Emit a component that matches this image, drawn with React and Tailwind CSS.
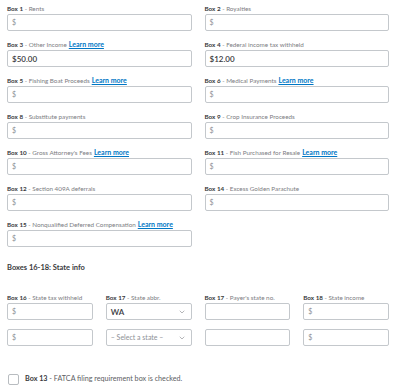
import { ChevronDown } from 'lucide-react';

const FIELDS = [
    { box: 'Box 1', label: 'Rents' },
    { box: 'Box 2', label: 'Royalties' },
    { box: 'Box 3', label: 'Other Income', learn: true, value: '$50.00' },
    { box: 'Box 4', label: 'Federal income tax withheld', value: '$12.00' },
    { box: 'Box 5', label: 'Fishing Boat Proceeds', learn: true },
    { box: 'Box 6', label: 'Medical Payments', learn: true },
    { box: 'Box 8', label: 'Substitute payments' },
    { box: 'Box 9', label: 'Crop Insurance Proceeds' },
    { box: 'Box 10', label: "Gross Attorney's Fees", learn: true },
    { box: 'Box 11', label: 'Fish Purchased for Resale', learn: true },
    { box: 'Box 12', label: 'Section 409A deferrals' },
    { box: 'Box 14', label: 'Excess Golden Parachute' },
    { box: 'Box 15', label: 'Nonqualified Deferred Compensation', learn: true },
];

function Label({ box, label, learn }) {
    return (
        <div className="h-[9px] leading-[9px] text-[6.3px] whitespace-nowrap mb-[1px]">
            <span className="font-bold text-[#393a3d]">{box}</span>
            <span className="text-[#7c7d82]"> - {label}</span>
            {learn && (
                <span className="ml-[2px] text-[7px] font-bold text-[#0077c5] underline">Learn more</span>
            )}
        </div>
    );
}

function Money({ value }) {
    return (
        <div className="h-[17px] rounded-[2px] border border-[#c4c8cc] bg-white flex items-center pl-[4px]">
            {value ? (
                <span className="text-[8px] font-semibold text-[#393a3d]">{value}</span>
            ) : (
                <span className="text-[7px] text-[#8d9096]">$</span>
            )}
        </div>
    );
}

function Select({ value, placeholder }) {
    return (
        <div className="h-[17px] rounded-[2px] border border-[#c4c8cc] bg-white flex items-center justify-between pl-[4px] pr-[5px]">
            {value ? (
                <span className="text-[8px] font-semibold text-[#393a3d]">{value}</span>
            ) : (
                <span className="text-[7px] text-[#8d9096]">{placeholder}</span>
            )}
            <ChevronDown size={8} strokeWidth={1.5} className="text-[#6b6c72]" />
        </div>
    );
}

export default function App() {
    return (
        <div className="w-[401px] h-[390px] bg-white pl-[7px] pr-[12px] pt-[4px] font-['Lato',sans-serif]">
            <div className="grid grid-cols-2 gap-x-[13px] gap-y-[9px]">
                {FIELDS.map(f => (
                    <div key={f.box}>
                        <Label {...f} />
                        <Money value={f.value} />
                    </div>
                ))}
            </div>

            <div className="mt-[16px] h-[10px] leading-[10px] text-[7.5px] font-bold text-[#393a3d]">
                Boxes 16-18: State info
            </div>

            <div className="mt-[20px] grid grid-cols-4 gap-x-[13px]">
                <Label box="Box 16" label="State tax withheld" />
                <Label box="Box 17" label="State abbr." />
                <Label box="Box 17" label="Payer's state no." />
                <Label box="Box 18" label="State income" />
            </div>
            <div className="grid grid-cols-4 gap-x-[13px] gap-y-[9px]">
                <Money />
                <Select value="WA" />
                <div className="h-[17px] rounded-[2px] border border-[#c4c8cc] bg-white" />
                <Money />
                <Money />
                <Select placeholder="– Select a state –" />
                <div className="h-[17px] rounded-[2px] border border-[#c4c8cc] bg-white" />
                <Money />
            </div>

            <label className="mt-[28px] flex items-center gap-[6px] pl-[1px]">
                <span className="w-[11px] h-[11px] rounded-[2px] border border-[#b8bcc0] bg-white" />
                <span className="text-[7.2px] text-[#5d5e63]">
                    <span className="font-bold text-[#393a3d]">Box 13</span> - FATCA filing requirement box is checked.
                </span>
            </label>
        </div>
    );
}
